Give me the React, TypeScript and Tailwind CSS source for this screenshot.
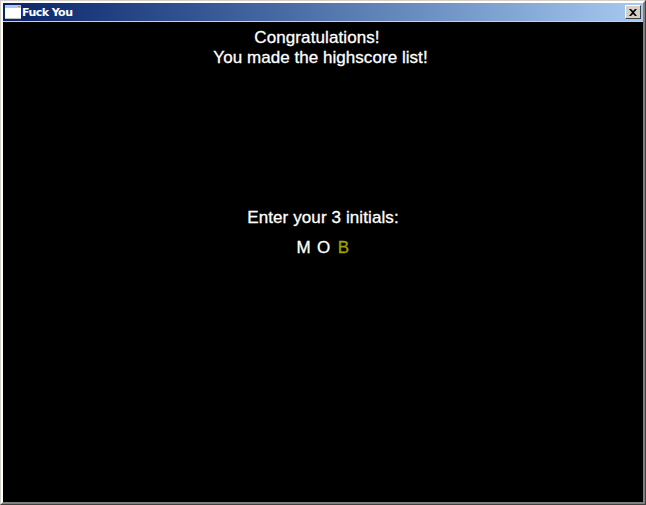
export default function App() {
  return (
    <div className="w-[646px] h-[505px] flex flex-col bg-[#d4d0c8] border-t border-l border-[#d4d0c8] border-r-[#404040] border-b-[#404040] border-r border-b overflow-hidden font-['Liberation_Sans',sans-serif]">
      <div className="flex-1 flex flex-col border-t-2 border-l-2 border-r-2 border-b-2 border-t-white border-l-white border-r-[#808080] border-b-[#808080] min-h-0">
        {/* title bar */}
        <div className="h-[18px] mx-0 flex items-center bg-gradient-to-r from-[#0a246a] to-[#a6caf0] pl-[2px] pr-[2px] shrink-0">
          <svg width="16" height="14" viewBox="0 0 16 14" className="shrink-0">
            <rect x="0" y="0" width="16" height="14" fill="#fff" />
            <rect x="0" y="0" width="16" height="3" fill="#a6caf0" />
            <rect x="13" y="1" width="2" height="1" fill="#e08030" />
            <rect x="0" y="13" width="16" height="1" fill="#c0c0c0" />
          </svg>
          <span className="ml-[1px] text-[11px] leading-none font-bold text-white font-['DejaVu_Sans',sans-serif] tracking-[-0.55px]">Fuck You</span>
          <button className="ml-auto w-4 h-[14px] flex items-center justify-center bg-[#d4d0c8] border border-t-white border-l-white border-r-[#404040] border-b-[#404040]">
            <svg width="8" height="7" viewBox="0 0 8 7">
              <path d="M0 0h2l2 2 2-2h2L5 3.500 8 7H6L4 5 2 7H0l3-3.500z" fill="#000" />
            </svg>
          </button>
        </div>
        {/* client area */}
        <div className="mt-[1px] flex-1 bg-black text-white text-[17px] leading-[20px] [-webkit-text-stroke:0.3px_currentColor] flex flex-col items-center pt-[6px]">
          <p className="pr-[12px] tracking-[0.1px]">Congratulations!</p>
          <p className="pr-[5px] tracking-[0.05px]">You made the highscore list!</p>
          <p className="mt-[140px] tracking-[0.1px]">Enter your 3 initials:</p>
          <div className="mt-[10px] flex pl-[1px]">
            <span className="w-5 text-center">M</span>
            <span className="w-5 text-center">O</span>
            <span className="w-5 text-center text-[#a0a000]">B</span>
          </div>
        </div>
      </div>
    </div>
  )
}
